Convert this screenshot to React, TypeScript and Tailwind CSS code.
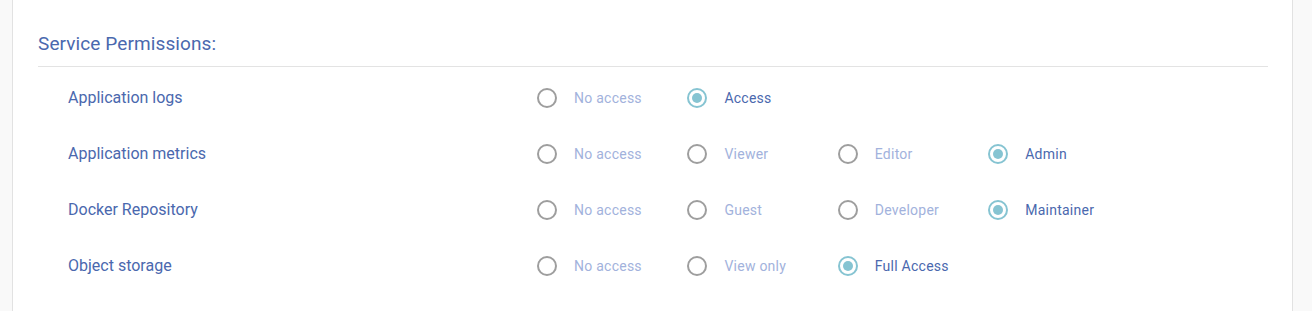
import React from "react";

type Row = { label: string; options: string[]; selected: number };

const rows: Row[] = [
  { label: "Application logs", options: ["No access", "Access"], selected: 1 },
  { label: "Application metrics", options: ["No access", "Viewer", "Editor", "Admin"], selected: 3 },
  { label: "Docker Repository", options: ["No access", "Guest", "Developer", "Maintainer"], selected: 3 },
  { label: "Object storage", options: ["No access", "View only", "Full Access"], selected: 2 },
];

function Radio({ checked }: { checked: boolean }) {
  return checked ? (
    <span className="flex h-5 w-5 shrink-0 items-center justify-center rounded-full border-2 border-[#86c4d2]">
      <span className="h-[10px] w-[10px] rounded-full bg-[#86c4d2]" />
    </span>
  ) : (
    <span className="h-5 w-5 shrink-0 rounded-full border-2 border-[#9e9e9e]" />
  );
}

export default function App() {
  return (
    <div className="h-[311px] w-[1312px] overflow-hidden bg-[#f9f9f9] px-3 pr-[19px] font-['Roboto',sans-serif]">
      <div className="h-full border-x border-[#e2e2e2] bg-white pl-[25px] pr-[24px] pt-[32px]">
        <div className="border-b border-[#e3e3e3] pb-[10px] text-[19px] leading-6 tracking-[0.1px] text-[#4a68ae]">
          Service Permissions:
        </div>
        <div className="pt-[3px]">
          {rows.map((r) => (
            <div key={r.label} className="flex h-14 items-center">
              <div className="w-[499px] shrink-0 pl-[30px] text-[16px] text-[#4a68ae]">{r.label}</div>
              {r.options.map((o, i) => (
                <div key={o} className="flex w-[150.4px] shrink-0 items-center">
                  <Radio checked={i === r.selected} />
                  <span
                    className={
                      "ml-[17px] text-[14px] tracking-[0.25px] " +
                      (i === r.selected ? "text-[#4a68ae]" : "text-[#a2b2dc]")
                    }
                  >
                    {o}
                  </span>
                </div>
              ))}
            </div>
          ))}
        </div>
      </div>
    </div>
  );
}
